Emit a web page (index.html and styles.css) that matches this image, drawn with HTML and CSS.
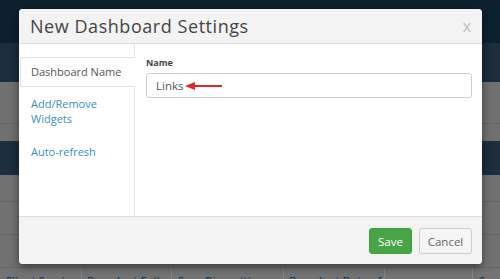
FILE: index.html
```html
<!DOCTYPE html>
<html>
<head>
<meta charset="utf-8">
<link rel="stylesheet" href="styles.css">
</head>
<body>
<div class="page">
  <div class="topbar"></div>
  <div class="subbar"></div>
  <div class="panel">
    <div class="panel-row"></div>
    <div class="panel-row short"></div>
  </div>
  <div class="bluebar"></div>
  <div class="rows">
    <div class="row first"></div>
    <div class="row"></div>
    <div class="row"></div>
  </div>
  <div class="thead">
    <div class="th c1">Client Service</div>
    <div class="th c2">Decedent Full</div>
    <div class="th c3">Case Disposition</div>
    <div class="th c4">Decedent Date of</div>
    <div class="th c5"></div>
    <div class="th c6">Case</div>
  </div>
</div>

<div class="modal">
  <div class="modal-header">
    <h2 class="modal-title">New Dashboard Settings</h2>
    <span class="close">x</span>
  </div>
  <div class="modal-body">
    <div class="sidebar">
      <div class="tab active">Dashboard Name</div>
      <div class="tab link">Add/Remove Widgets</div>
      <div class="tab link">Auto-refresh</div>
    </div>
    <div class="content">
      <label class="field-label">Name</label>
      <div class="input">
        <span class="input-text">Links</span>
        <svg class="arrow" width="40" height="10" viewBox="0 0 40 10">
          <path d="M0 5 L10 1 L10 4 L37 4 L37 6 L10 6 L10 9 Z" fill="#e0262b"/>
        </svg>
      </div>
    </div>
  </div>
  <div class="modal-footer">
    <button class="btn save">Save</button>
    <button class="btn cancel">Cancel</button>
  </div>
</div>
</body>
</html>
```

FILE: styles.css
```css
html, body {
  margin: 0;
  padding: 0;
}
body {
  width: 500px;
  height: 279px;
  overflow: hidden;
  position: relative;
  font-family: "Open Sans", "DejaVu Sans", sans-serif;
  background: #707070;
}
.page {
  display: flex;
  flex-direction: column;
}
.topbar {
  height: 43px;
  background: #0c212e;
}
.subbar {
  height: 39px;
  background: #1b2e3b;
}
.panel-row {
  height: 41px;
  border-bottom: 1px solid #646464;
  background: #707070;
}
.panel-row.short {
  height: 17px;
  border-bottom: none;
}
.bluebar {
  height: 34px;
  background: #1b2e3b;
}
.row {
  height: 32px;
  border-bottom: 1px solid #646464;
  background: #717171;
}
.row.first {
  height: 26px;
}
.thead {
  display: flex;
  height: 20px;
  background: #737373;
}
.th {
  box-sizing: border-box;
  padding: 5px 0 0 5px;
  font-size: 11px;
  font-weight: 600;
  color: #1d3a57;
  white-space: nowrap;
  overflow: hidden;
  border-right: 1px solid #868686;
}
.c1 { width: 82px; }
.c2 { width: 90px; }
.c3 { width: 112px; }
.c4 { width: 101px; }
.c5 { width: 88px; }
.c6 { flex: 1; border-right: none; }

/* modal */
.modal {
  position: absolute;
  left: 19px;
  top: 9px;
  width: 463px;
  height: 255px;
  border-radius: 4px;
  background: #fff;
  box-shadow: 0 3px 9px rgba(0, 0, 0, 0.5);
  overflow: hidden;
  display: flex;
  flex-direction: column;
}
.modal-header {
  height: 34px;
  background: #f3f3f3;
  border-bottom: 1px solid #dcdcdc;
  display: flex;
  align-items: center;
  justify-content: space-between;
  padding: 0 11px 0 11px;
}
.modal-title {
  margin: 0;
  font-size: 18px;
  font-weight: 400;
  color: #444;
  letter-spacing: 0.55px;
}
.close {
  font-size: 16px;
  color: #bbb;
  margin-top: -1px;
}
.modal-body {
  flex: 1;
  display: flex;
}
.sidebar {
  width: 116px;
  border-right: 1px solid #e3e3e3;
  padding-top: 13px;
  box-sizing: border-box;
  position: relative;
}
.tab {
  padding: 9px 8px 9px 12px;
  font-size: 11px;
  line-height: 15px;
  color: #555;
}
.tab.active {
  margin-right: -1px;
  margin-left: 1px;
  padding: 7px 8px 7px 10px;
  line-height: 14px;
  background: #fff;
  border: 1px solid #e0e0e0;
  border-right: none;
  border-radius: 3px 0 0 3px;
}
.tab.link {
  color: #3a8cc4;
  width: 80px;
}
.content {
  flex: 1;
  padding: 13px 10px 0 11px;
}
.field-label {
  display: block;
  font-size: 9px;
  font-weight: 700;
  color: #444;
  line-height: 12px;
  margin-bottom: 4px;
}
.input {
  height: 23px;
  border: 1px solid #cfcfcf;
  border-radius: 3px;
  display: flex;
  align-items: center;
  padding-left: 9px;
}
.input-text {
  font-size: 11.5px;
  color: #555;
}
.arrow {
  display: block;
  margin-left: 2px;
  margin-top: 1px;
}
.modal-footer {
  height: 48px;
  background: #f3f3f3;
  border-top: 1px solid #dcdcdc;
  display: flex;
  justify-content: flex-end;
  align-items: flex-start;
  padding: 11px 10px 0 0;
  box-sizing: border-box;
  gap: 7px;
}
.btn {
  height: 26px;
  font-family: "Open Sans", "DejaVu Sans", sans-serif;
  font-size: 11.5px;
  border-radius: 3px;
  padding: 0;
  margin: 0;
}
.save {
  width: 43px;
  background: #47a547;
  border: 1px solid #42a042;
  color: #fff;
}
.cancel {
  width: 53px;
  background: #f5f5f5;
  border: 1px solid #cccccc;
  color: #666;
}
```
